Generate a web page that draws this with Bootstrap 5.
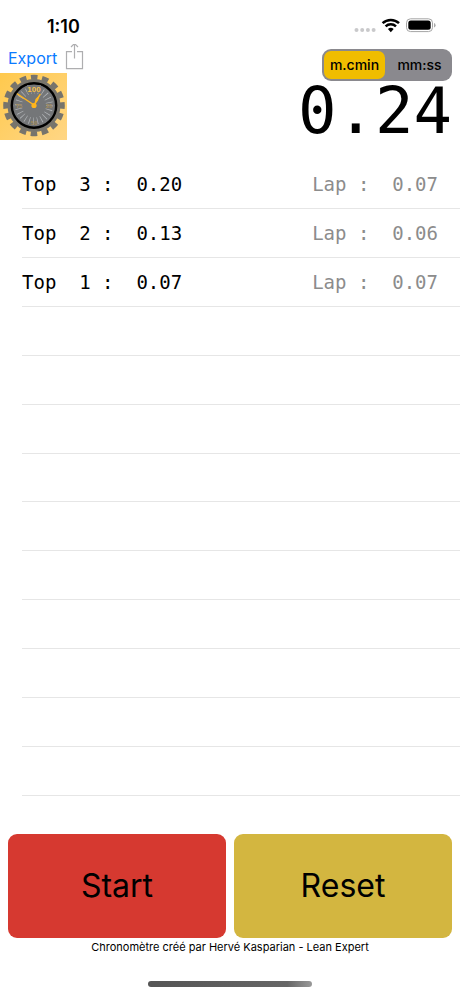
<!DOCTYPE html>
<html lang="fr">
<head>
<meta charset="utf-8">
<meta name="viewport" content="width=device-width, initial-scale=1">
<title>Chronomètre</title>
<link href="https://cdn.jsdelivr.net/npm/bootstrap@5.3.0/dist/css/bootstrap.min.css" rel="stylesheet">
<style>
  body { font-family: Inter, "Liberation Sans", sans-serif; background: #fff; color: #000; }
  .status-bar { height: 44px; padding: 6px 24px 0 47px; }
  .clock-text { font-size: 18px; line-height: 20px; padding-top: 3px; font-weight: 600; }
  .tool-area { height: 100px; }
  .export-link { font-size: 16px; line-height: 28px; color: #0a7aff; }
  .unit-switch { background: #8a898e; border-radius: 9px; padding: 2px; width: 130px; height: 32px; margin-top: 5px; }
  .unit-switch .unit { flex: 1 1 0; font-size: 14px; font-weight: 500; line-height: 28px; border-radius: 7px; text-align: center; cursor: pointer; }
  .unit-switch .btn-check:checked + .unit { background: #f0bd00; }
  .mono { font-family: "DejaVu Sans Mono", monospace; }
  .total { font-size: 64px; line-height: 60px; }
  .laps { margin: 16px 0 0 22px; }
  .laps li { flex: 1 1 0; min-height: 40px; font-size: 19px; border-bottom: 1px solid #e6e6e6; padding-right: 22px; white-space: pre; }
  .lap-time { color: #8c8c8c; }
  .big-btn { height: 104px; font-size: 32px; border-radius: 9px; border: 0; color: #000; }
  .start-btn, .start-btn:hover { background: #d63930; color: #000; }
  .reset-btn, .reset-btn:hover { background: #d3b640; color: #000; }
  .controls { padding: 38px 8px 0; }
  .credit { font-size: 11px; line-height: 18px; }
  .home-bar { width: 164px; height: 6px; border-radius: 3px; background: linear-gradient(90deg, #555, #666 85%, #999); margin: 25px auto 9px; }
</style>
<script src="https://cdn.jsdelivr.net/npm/bootstrap@5.3.0/dist/js/bootstrap.bundle.min.js"></script>
</head>
<body>
<div class="d-flex flex-column min-vh-100">
  <div class="status-bar d-flex align-items-center justify-content-between">
    <span class="clock-text">1:10</span>
    <svg width="82" height="16" viewBox="0 0 82 16" aria-hidden="true">
      <g fill="#c9c9cb"><circle cx="2.500" cy="13" r="2"/><circle cx="8.200" cy="13" r="2"/><circle cx="13.900" cy="13" r="2"/><circle cx="19.600" cy="13" r="2"/></g>
      <g fill="none" stroke="#000" stroke-width="2.500"><path d="M28.600 6.200a12 12 0 0 1 16.400 0"/><path d="M31.600 9.400a7.600 7.600 0 0 1 10.400 0"/></g>
      <path d="M33.900 12a4.300 4.300 0 0 1 5.800 0L36.800 15.200z"/>
      <rect x="52.500" y="1.800" width="26" height="12.800" rx="4" fill="none" stroke="#a5a5a5"/>
      <rect x="54.300" y="3.600" width="22.400" height="9.200" rx="2.500"/>
      <path d="M80 6v4.500q1.600-.6 1.600-2.250T80 6" fill="#aaa"/>
    </svg>
  </div>

  <header class="tool-area d-flex justify-content-between">
    <div class="d-flex flex-column">
      <a href="#" class="export-link d-flex text-decoration-none ps-2 gap-2">Export
        <svg width="19" height="28" viewBox="0 0 19 28" fill="none" stroke="#aeaeb0" stroke-width="1.200" aria-hidden="true">
          <path d="M7 7.600H1.500v17h16v-17H12M9.500 14.500V-.5M6 3l3.500-3.500L13 3"/>
        </svg>
      </a>
      <svg class="mt-auto mb-1" width="67" height="67" viewBox="0 0 67 67" role="img" aria-label="Chronomètre">
        <defs>
          <linearGradient id="gold" x1="0" x2="1" y1="0" y2="1"><stop offset="0" stop-color="#ffc94d"/><stop offset="1" stop-color="#ffd685"/></linearGradient>
        </defs>
        <rect width="67" height="67" fill="url(#gold)"/>
        <g transform="translate(34 32.500)">
          <circle r="28.300" fill="none" stroke="#77746c" stroke-width="5" stroke-dasharray="6.500 4.614" transform="rotate(-6.600)"/>
          <circle r="26.500" fill="#77746c"/>
          <circle r="22.200" fill="#747678" stroke="#000" stroke-width="2.400"/>
          <circle r="15.500" fill="none" stroke="#b4b7ba" stroke-width="7" stroke-dasharray=".7 3.358"/>
          <g fill="#f6c04c" font-family="Liberation Sans, sans-serif" font-weight="700" text-anchor="middle">
            <rect x="-7" y="-20.500" width="14" height="7.500" fill="#747678"/>
            <text y="-13.500" font-size="8">100</text>
            <g font-size="6" fill="#a38b58"><text x="15" y="2.500">25</text><text y="19">50</text><text x="-15" y="2.500">75</text></g>
          </g>
          <path d="M-16.500-11.500L0-.5M6-11L0 0" stroke="#ffb51d" stroke-width="1.500" stroke-linecap="round"/>
          <path d="M6-11L1.500-6.500 0 0l4-5z" fill="#ffb51d"/>
          <circle r="2.600" fill="#ffb51d"/>
        </g>
      </svg>
    </div>
    <div class="d-flex flex-column align-items-end pe-2">
      <div class="unit-switch d-flex" role="radiogroup" aria-label="Unité">
        <input type="radio" class="btn-check" name="unit" id="unit-cmin" checked>
        <label class="unit" for="unit-cmin">m.cmin</label>
        <input type="radio" class="btn-check" name="unit" id="unit-mmss">
        <label class="unit ps-1" for="unit-mmss">mm:ss</label>
      </div>
      <output class="mono total">0.24</output>
    </div>
  </header>

  <ol class="laps list-unstyled mono flex-grow-1 d-flex flex-column">
    <li class="d-flex align-items-center justify-content-between"><span>Top  3 :  0.20</span><span class="lap-time">Lap :  0.07</span></li>
    <li class="d-flex align-items-center justify-content-between"><span>Top  2 :  0.13</span><span class="lap-time">Lap :  0.06</span></li>
    <li class="d-flex align-items-center justify-content-between"><span>Top  1 :  0.07</span><span class="lap-time">Lap :  0.07</span></li>
    <li></li><li></li><li></li><li></li><li></li><li></li><li></li><li></li><li></li><li></li>
  </ol>

  <footer class="controls">
    <div class="row g-2">
      <div class="col-6"><button type="button" class="btn big-btn start-btn w-100">Start</button></div>
      <div class="col-6"><button type="button" class="btn big-btn reset-btn w-100">Reset</button></div>
    </div>
    <div class="credit text-center">Chronomètre créé par Hervé Kasparian - Lean Expert</div>
    <div class="home-bar"></div>
  </footer>
</div>
</body>
</html>
